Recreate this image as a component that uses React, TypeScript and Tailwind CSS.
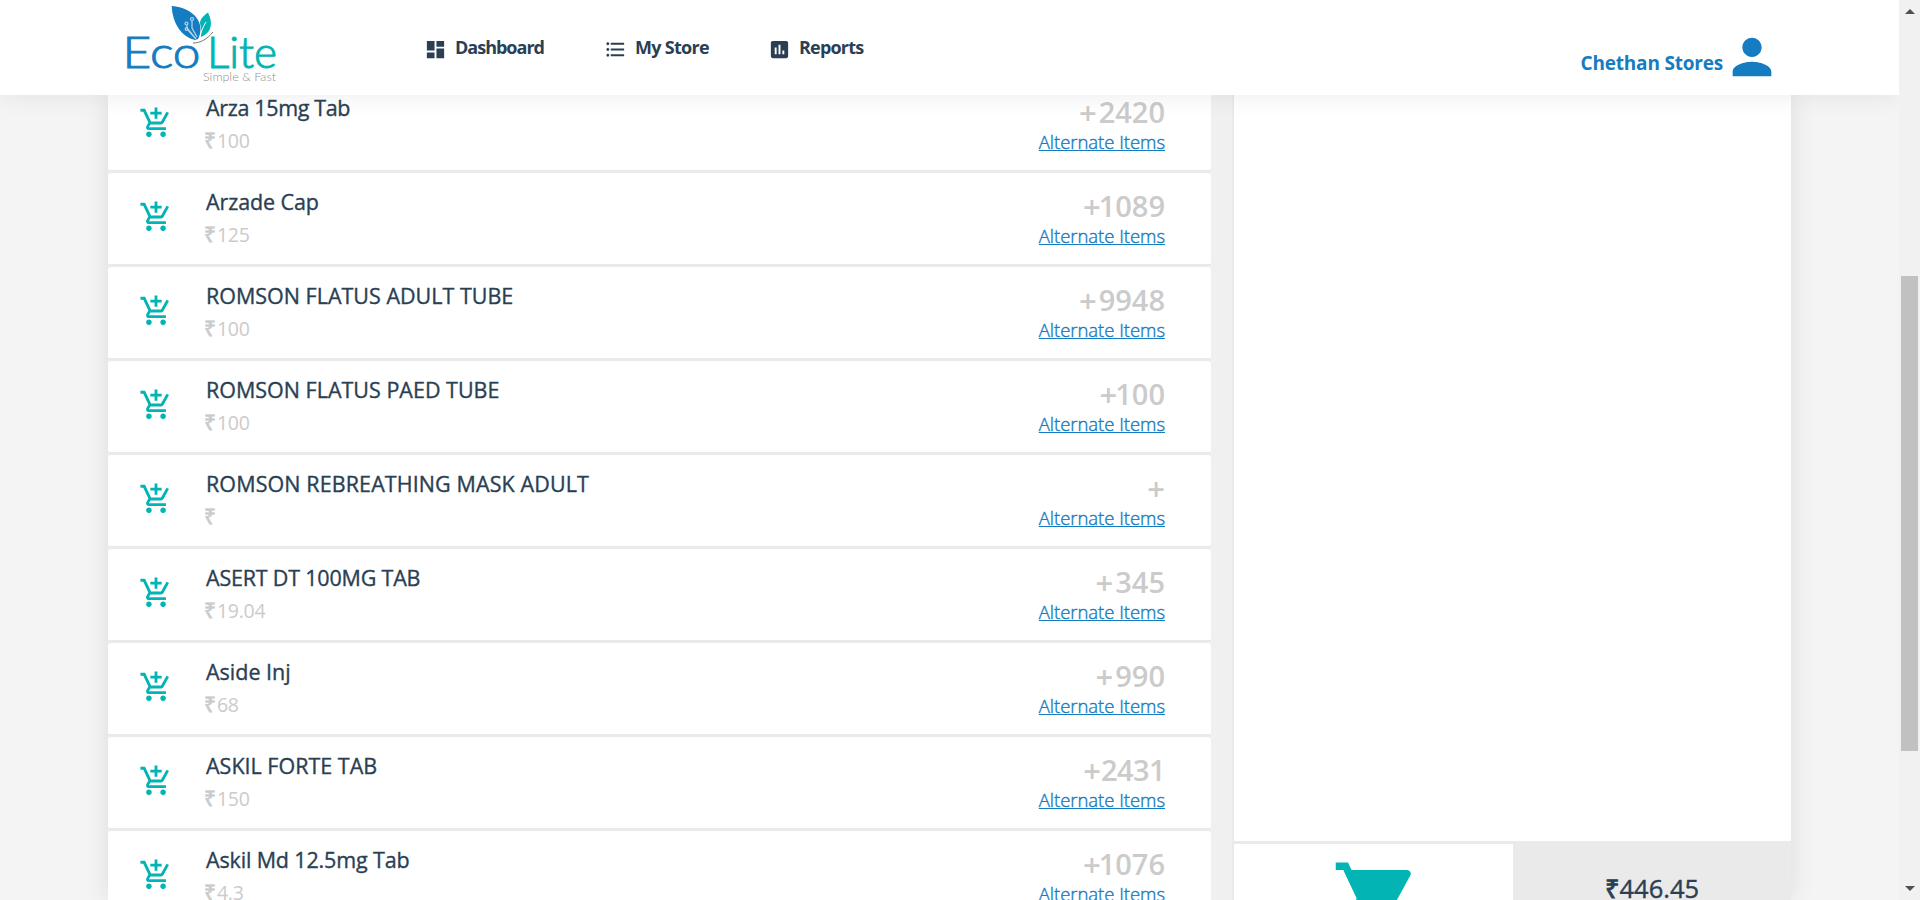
import React from "react";
import { MdDashboard, MdFormatListBulleted, MdAssessment, MdPerson, MdOutlineAddShoppingCart, MdShoppingCart } from "react-icons/md";

type Item = { name: string; price: string; stock: string; track: string };

const items: Item[] = [
  { name: "Arza 15mg Tab", price: "100", stock: "2420", track: "tracking-[-0.35px]" },
  { name: "Arzade Cap", price: "125", stock: "1089", track: "tracking-[-0.1px]" },
  { name: "ROMSON FLATUS ADULT TUBE", price: "100", stock: "9948", track: "tracking-[0px]" },
  { name: "ROMSON FLATUS PAED TUBE", price: "100", stock: "100", track: "tracking-[0px]" },
  { name: "ROMSON REBREATHING MASK ADULT", price: "", stock: "", track: "tracking-[0.1px]" },
  { name: "ASERT DT 100MG TAB", price: "19.04", stock: "345", track: "tracking-[-0.2px]" },
  { name: "Aside Inj", price: "68", stock: "990", track: "tracking-[0px]" },
  { name: "ASKIL FORTE TAB", price: "150", stock: "2431", track: "tracking-[0px]" },
  { name: "Askil Md 12.5mg Tab", price: "4.3", stock: "1076", track: "tracking-[-0.15px]" },
];

function Logo() {
  return (
    <svg width="160" height="90" viewBox="0 0 160 90" className="ml-[120px] shrink-0">
      <path d="M51.700 6C66 7 80 15 80.500 29c0 4-1 7-2.500 10l-3 1C62 37 52.500 24 51.700 6z" fill="#167cc1" />
      <path d="M88 12.500c-5 3.500-8 7-8 11 1.500 4 1.500 9 .5 13.500 9-3 14-11 7.500-24.500z" fill="#02b4b4" />
      <path d="M80 38c1-7 3-11 6-16" stroke="#fff" strokeWidth="1" fill="none" />
      <g stroke="#b9d8ee" strokeWidth="1.200" fill="none">
        <path d="M72 21v7l5 9M67 25v3l9 11M68 30l8 9" />
        <circle cx="72" cy="19" r="1.500" />
        <circle cx="66.500" cy="23.500" r="1.500" />
        <circle cx="66.500" cy="29" r="1.300" />
      </g>
      <path d="M73 43c8 0 14-4 20-11" stroke="#777" strokeWidth="1" fill="none" />
      <g fontFamily="Lato, sans-serif" fontWeight="300">
        <g fontSize="43.500" strokeWidth="1">
          <text x="2.500" y="68" fill="#167cc1" stroke="#167cc1" textLength="78" lengthAdjust="spacingAndGlyphs">Eco</text>
          <text x="87" y="68" fill="#02b4b4" stroke="#02b4b4" textLength="70" lengthAdjust="spacingAndGlyphs">Lite</text>
        </g>
        <text x="83" y="81" fontSize="12" fill="#8f8f8f" textLength="73" lengthAdjust="spacingAndGlyphs">Simple &amp; Fast</text>
      </g>
    </svg>
  );
}

function Header() {
  return (
    <header className="relative z-10 flex h-[95px] shrink-0 items-start bg-white shadow-[0_0_24px_rgba(0,0,0,0.08)]">
      <Logo />
      <nav className="flex pt-[34px] text-[18px] leading-[26px] font-bold text-[#2a3f54]">
        <a className="ml-[144px] flex w-[180px] items-start">
          <MdDashboard size={23} className="mt-[4px] mr-[8px]" />
          <span className="tracking-[-1px]">Dashboard</span>
        </a>
        <a className="flex w-[164px] items-start">
          <MdFormatListBulleted size={23} className="mt-[4px] mr-[8px]" />
          <span className="tracking-[-0.7px]">My Store</span>
        </a>
        <a className="flex items-start">
          <MdAssessment size={23} className="mt-[4px] mr-[8px]" />
          <span className="tracking-[-0.8px]">Reports</span>
        </a>
      </nav>
      <div className="mr-[118px] ml-auto flex pt-[28px] text-[#167cc1]">
        <span className="mt-[22px] text-[19px] leading-[26px] font-bold tracking-[-0.2px]">Chethan Stores</span>
        <MdPerson size={58} />
      </div>
    </header>
  );
}

const stockClass = (value: string) => {
  if (value.startsWith("1")) return "-ml-[2px]";
  if (value.endsWith("1")) return "tracking-[-0.6px]";
  return "ml-[2px]";
};

function Stock({ value }: { value: string }) {
  return (
    <div className="flex text-[29px] leading-[40px] font-semibold text-[#cbcbcb]">
      <span className="text-[31px]">+</span>
      {value && <span className={stockClass(value)}>{value}</span>}
    </div>
  );
}

function Row({ item }: { item: Item }) {
  return (
    <li className="flex h-[94px] shrink-0 rounded-[4px] border-b-[3px] border-[#eaeaea] bg-white">
      <MdOutlineAddShoppingCart size={34} className="mt-[27px] ml-[31px] shrink-0 text-[#02b4b4]" />
      <div className="ml-[33px] flex-1 pt-[14px]">
        <div className="text-[21.500px] leading-[30px] text-[#2a3f54] [-webkit-text-stroke:0.35px_#2a3f54]">
          <span className={item.track}>{item.name}</span>
        </div>
        <div className="mt-[4px] -ml-[2px] flex text-[19.500px] leading-[28px] text-[#cbcbcb]">
          <span className="-mt-px text-[21px] [-webkit-text-stroke:0.8px_#cbcbcb]">₹</span>
          <span className="ml-px tracking-[-0.3px]">{item.price}</span>
        </div>
      </div>
      <div className="flex flex-col items-end pt-[13px] pr-[46px]">
        <Stock value={item.stock} />
        <a className="-mt-[3px] text-[18.500px] leading-[26px] font-light tracking-[-0.03px] text-[#167cc1] underline decoration-1 [-webkit-text-stroke:0.4px_#167cc1]">Alternate Items</a>
      </div>
    </li>
  );
}

function Scrollbar() {
  return (
    <div className="flex w-[21px] shrink-0 flex-col items-center bg-[#f1f1f1]">
      <svg width="21" height="21"><path d="M6 14l5-5 5 5z" fill="#505050" /></svg>
      <div className="mt-[255px] h-[475px] w-[17px] bg-[#c1c1c1]" />
      <svg width="21" height="21" className="mt-auto"><path d="M6 7h10l-5 5z" fill="#505050" /></svg>
    </div>
  );
}

export default function App() {
  return (
    <div className="flex h-[900px] w-[1920px] overflow-hidden bg-[#f4f4f4] font-['Open_Sans','Noto_Sans',sans-serif]">
      <div className="flex min-w-0 flex-1 flex-col overflow-hidden">
        <Header />
        <main className="mr-[108px] ml-[108px] flex min-h-0 flex-1 bg-[#f0f0f0] shadow-[0_0_24px_rgba(0,0,0,0.1)]">
          <ul className="-mt-[16px] flex w-[1103px] flex-col">
            {items.map((item) => (
              <Row key={item.name} item={item} />
            ))}
          </ul>
          <section className="ml-[21px] flex flex-1 flex-col border-l-2 border-[#eaeaea] bg-white">
            <div className="h-[746px] shrink-0" />
            <div className="flex h-[59px] shrink-0 overflow-hidden border-t-[3px] border-[#eaeaea]">
              <div className="flex h-[140px] w-[279px] justify-center pt-[11px] pl-[7px] text-[#02b4b4]">
                <MdShoppingCart size={90} />
              </div>
              <div className="flex-1 bg-[#eaeaea] pt-[27px] text-center text-[25.500px] leading-[34px] text-[#2a3f54] [-webkit-text-stroke:0.4px_#2a3f54]">
                <span className="[-webkit-text-stroke:0.9px_#2a3f54]">₹</span>
                <span>446.45</span>
              </div>
            </div>
          </section>
        </main>
      </div>
      <Scrollbar />
    </div>
  );
}
